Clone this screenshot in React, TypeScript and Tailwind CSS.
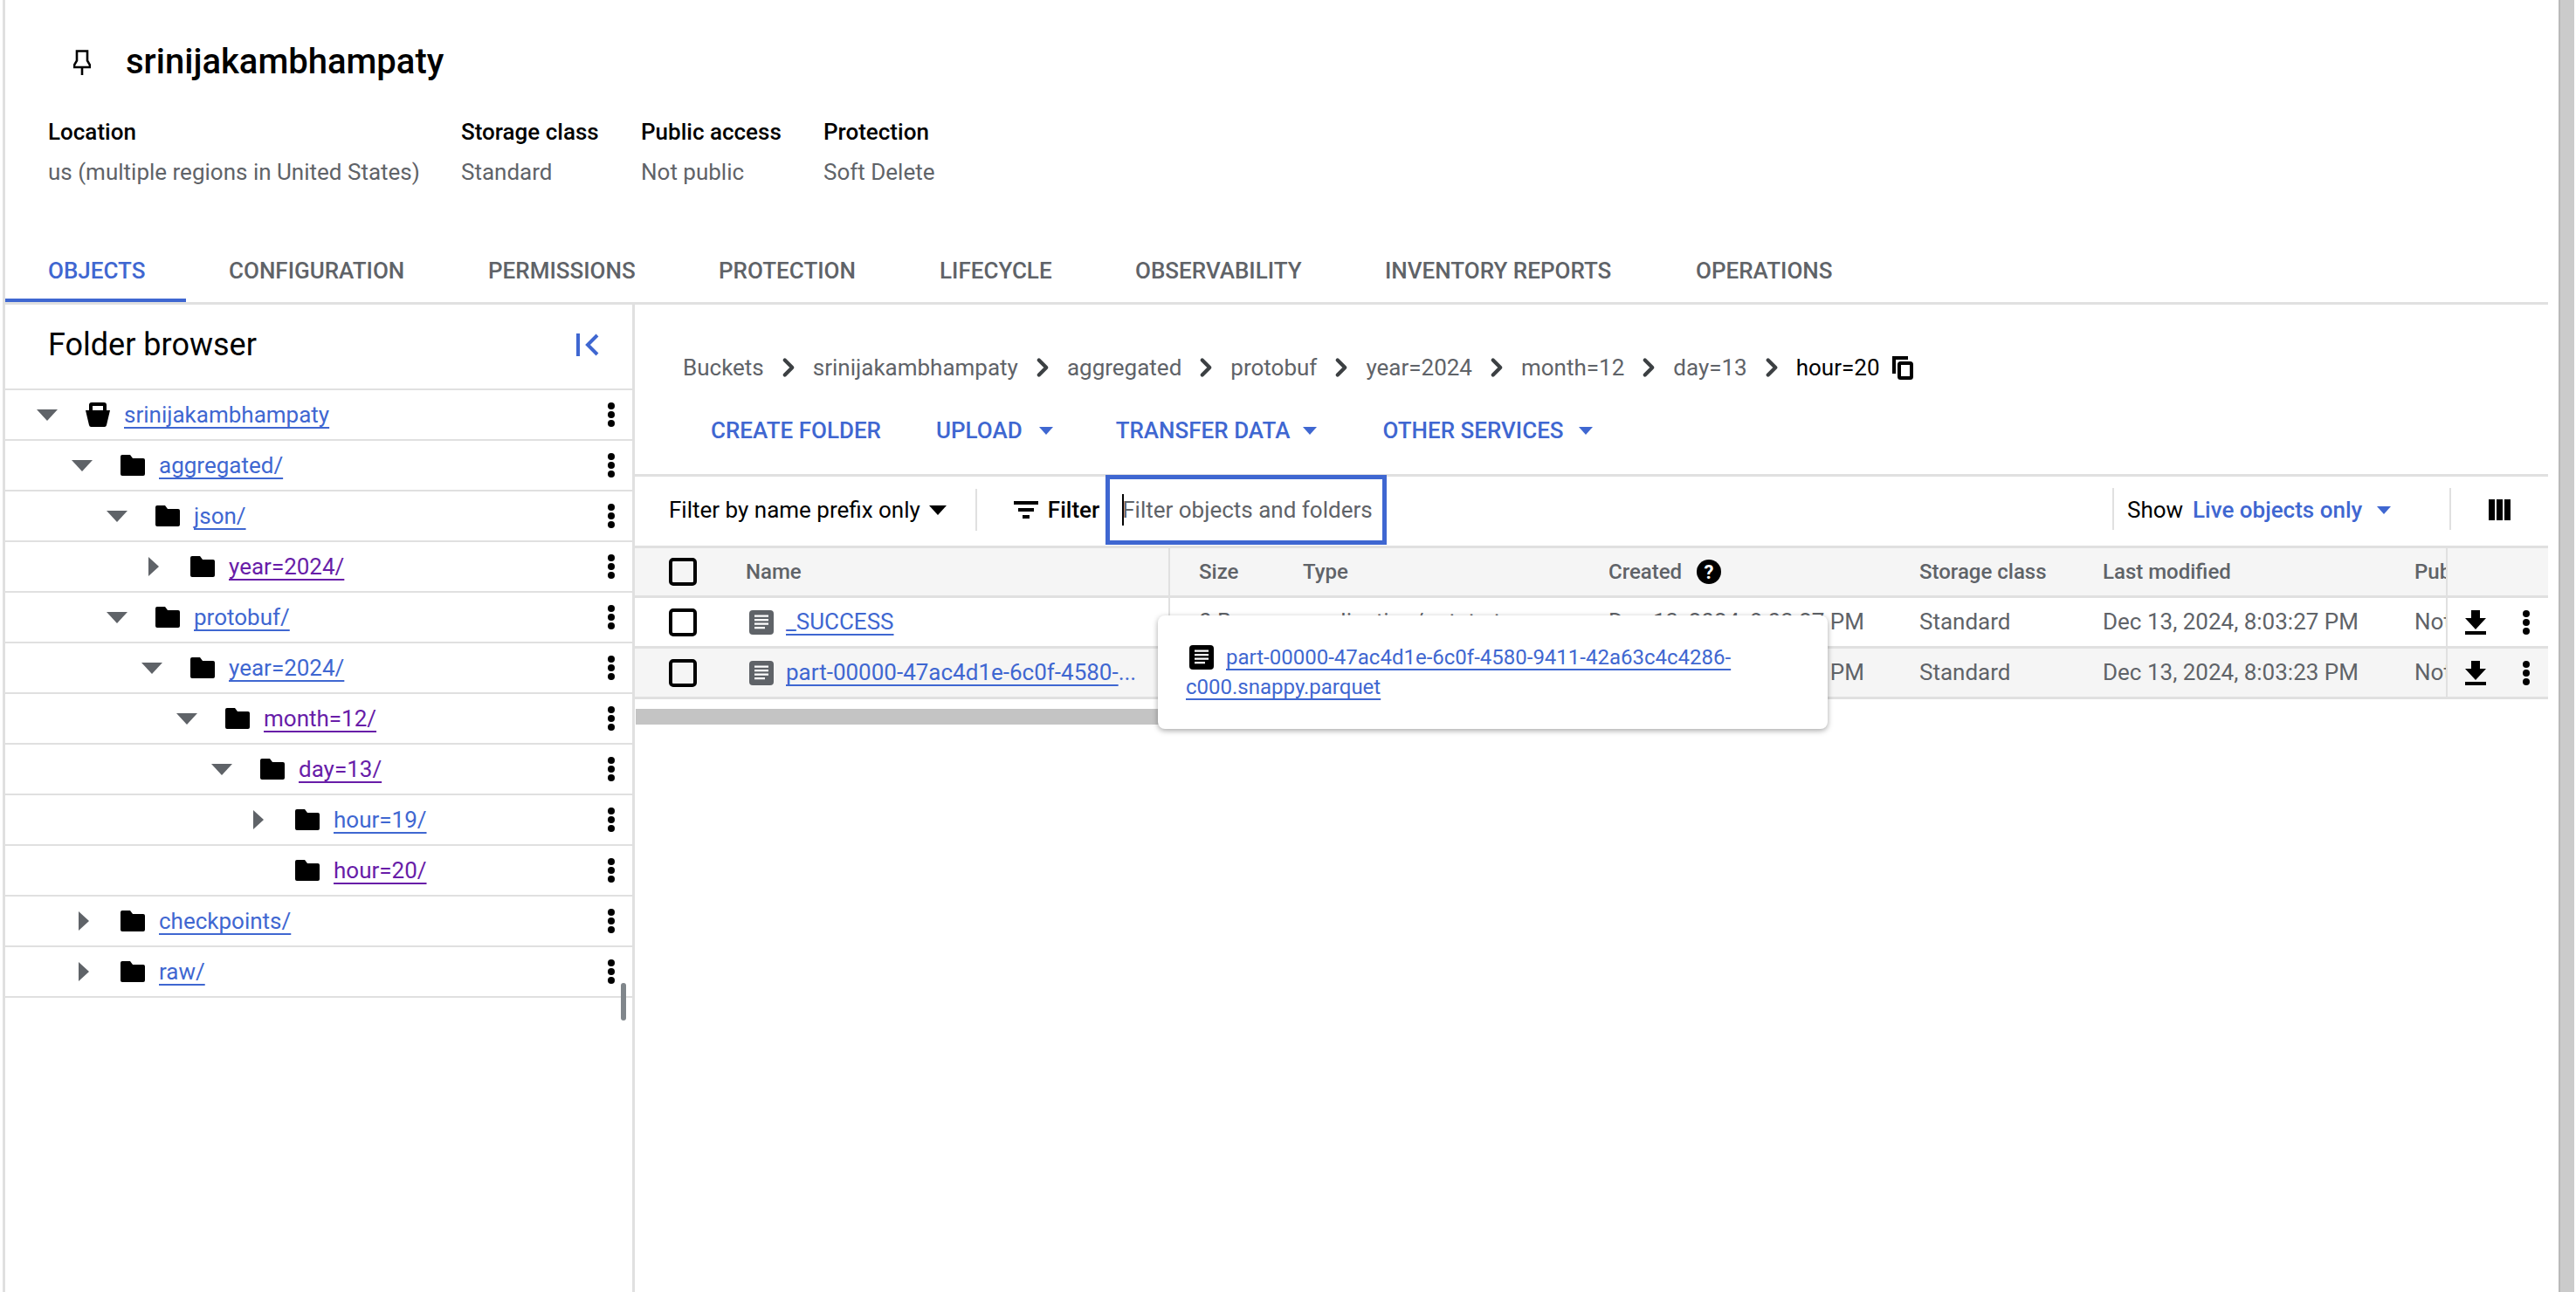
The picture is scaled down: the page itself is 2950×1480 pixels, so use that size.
import { ChevronRight } from "lucide-react";

const BLUE = "text-[#3f67d1]";
const LINK = "underline decoration-2 underline-offset-[5px] [text-decoration-skip-ink:none]";

const tabs = [
  { label: "OBJECTS", w: "w-[207px]" },
  { label: "CONFIGURATION", w: "w-[297px]" },
  { label: "PERMISSIONS", w: "w-[264px]" },
  { label: "PROTECTION", w: "w-[253px]" },
  { label: "LIFECYCLE", w: "w-[224px]" },
  { label: "OBSERVABILITY", w: "w-[286px]" },
  { label: "INVENTORY REPORTS", w: "w-[356px]" },
  { label: "OPERATIONS", w: "w-[260px]" },
];

const tree = [
  { name: "srinijakambhampaty", level: 0, arrow: "down", bucket: true },
  { name: "aggregated/", level: 1, arrow: "down" },
  { name: "json/", level: 2, arrow: "down" },
  { name: "year=2024/", level: 3, arrow: "right", visited: true },
  { name: "protobuf/", level: 2, arrow: "down" },
  { name: "year=2024/", level: 3, arrow: "down" },
  { name: "month=12/", level: 4, arrow: "down", visited: true },
  { name: "day=13/", level: 5, arrow: "down", visited: true },
  { name: "hour=19/", level: 6, arrow: "right" },
  { name: "hour=20/", level: 6, arrow: "none", visited: true },
  { name: "checkpoints/", level: 1, arrow: "right" },
  { name: "raw/", level: 1, arrow: "right" },
];

const crumbs = ["Buckets", "srinijakambhampaty", "aggregated", "protobuf", "year=2024", "month=12", "day=13"];

function Kebab({ className = "" }: { className?: string }) {
  return (
    <svg viewBox="0 0 10 30" className={`w-[10px] h-[30px] ${className}`} fill="currentColor">
      <circle cx="5" cy="5" r="4" />
      <circle cx="5" cy="15" r="4" />
      <circle cx="5" cy="25" r="4" />
    </svg>
  );
}

function Folder() {
  return (
    <svg viewBox="0 0 28 24" className="w-[28px] h-[24px] shrink-0" fill="#000">
      <path d="M2 0h9l3 4h12a2 2 0 0 1 2 2v16a2 2 0 0 1-2 2H2a2 2 0 0 1-2-2V2a2 2 0 0 1 2-2z" />
    </svg>
  );
}

function Bucket() {
  return (
    <svg viewBox="0 0 28 28" className="w-[28px] h-[28px] shrink-0" fill="#000">
      <path fillRule="evenodd" d="M7 0h14a3 3 0 0 1 3 3v6h4l-4 17a2.500 2.500 0 0 1-2.500 2h-15A2.500 2.500 0 0 1 4 26L0 9h4V3a3 3 0 0 1 3-3zm1 4v5h12V4H8z" />
    </svg>
  );
}

function FileIcon({ color }: { color: string }) {
  return (
    <svg viewBox="0 0 28 28" className="w-[28px] h-[28px] shrink-0">
      <rect width="28" height="28" rx="4" fill={color} />
      <path d="M6 5.500h16v2.200H6zM6 10h16v2.200H6zM6 14.500h16v2.200H6zM6 19h12v2.200H6z" fill="#fff" />
    </svg>
  );
}

function Caret({ className = "" }: { className?: string }) {
  return <span className={`inline-block w-0 h-0 border-x-[8px] border-x-transparent border-t-[9px] ${className}`} />;
}

function Checkbox() {
  return <span className="block w-[32px] h-[32px] border-[4px] border-black rounded-[5px] shrink-0" />;
}

function Download() {
  return (
    <svg viewBox="0 0 24 28" className="w-[24px] h-[28px]" fill="#000">
      <path d="M7 0h10v9h7L12 22 0 9h7zM0 24h24v4H0z" />
    </svg>
  );
}

function TreeRow({ row }: { row: (typeof tree)[number] }) {
  return (
    <div className="h-[58px] border-b-2 border-[#e0e0e0] flex items-center shrink-0">
      <div className="flex items-center" style={{ paddingLeft: 30 + row.level * 40 }}>
        <div className="w-[38px] flex items-center justify-center -ml-[1px]">
          {row.arrow === "down" && (
            <span className="w-0 h-0 border-x-[12px] border-x-transparent border-t-[13px] border-t-[#5f6368]" />
          )}
          {row.arrow === "right" && (
            <span className="ml-[4px] w-0 h-0 border-y-[11px] border-y-transparent border-l-[12px] border-l-[#5f6368]" />
          )}
        </div>
        <div className="w-[44px] pl-[25px] flex items-center overflow-visible">
          {row.bucket ? <Bucket /> : <Folder />}
        </div>
        <a className={`ml-[25px] text-[26px] leading-[34px] ${LINK} ${row.visited ? "text-[#681da8]" : BLUE}`}>
          {row.name}
        </a>
      </div>
      <Kebab className="ml-auto mr-[19px] shrink-0 text-black" />
    </div>
  );
}

function HeaderCell({ label, className = "" }: { label: string; className?: string }) {
  return <div className={`shrink-0 text-[24px] font-medium text-[#5f6368] ${className}`}>{label}</div>;
}

function ObjectRow({ name, time, shaded, partial }: { name: string; time: string; shaded?: boolean; partial?: string }) {
  return (
    <div className={`h-[58px] border-b-[3px] border-[#e0e0e0] flex items-center overflow-hidden ${shaded ? "bg-[#f5f5f5]" : "bg-white"}`}>
      <div className="w-[613px] shrink-0 flex items-center pl-[39px] border-r-2 border-[#e0e0e0] h-full">
        <Checkbox />
        <div className="ml-[60px] flex items-center">
          <FileIcon color="#5f6368" />
          <div className={`ml-[14px] text-[26px] ${BLUE} whitespace-nowrap`}>
            <span className={LINK}>{name}</span>
            {partial && <span>{partial}</span>}
          </div>
        </div>
      </div>
      <div className="w-[152px] shrink-0 pl-[33px] text-[26px] text-[#5f6368]">0 B</div>
      <div className="w-[350px] shrink-0 text-[26px] text-[#5f6368] whitespace-nowrap overflow-hidden">application/octet-stream</div>
      <div className="w-[356px] shrink-0 text-[26px] text-[#5f6368] whitespace-nowrap">{time}</div>
      <div className="w-[210px] shrink-0 text-[26px] text-[#5f6368]">Standard</div>
      <div className="w-[357px] shrink-0 text-[26px] text-[#5f6368] whitespace-nowrap">{time}</div>
      <div className="w-[36px] shrink-0 text-[26px] text-[#5f6368] overflow-hidden whitespace-nowrap">Not public</div>
      <div className="w-[116px] h-full shrink-0 flex items-center border-l-2 border-[#e0e0e0]">
        <div className="ml-[20px]"><Download /></div>
        <Kebab className="ml-[41px] text-black" />
      </div>
    </div>
  );
}

export default function App() {
  return (
    <div
      className="relative w-[2950px] h-[1480px] bg-white overflow-hidden flex"
      style={{ fontFamily: "Roboto, sans-serif" }}
    >
      <div className="flex-1 min-w-0 border-l-[3px] border-[#e0e0e0] ml-[3px] flex flex-col">
        <div className="w-[2912px] flex flex-col">
          {/* Header */}
          <div className="h-[113px] pl-[51px] flex items-end pb-[18px]">
            <div className="flex items-center">
              <svg viewBox="0 0 20 29" className="ml-[27px] w-[20px] h-[29px]" fill="none" stroke="#000" strokeWidth="2.600">
                <path d="M4 1.500h12v11l3 5v2.500H1v-2.500l3-5zM10 20v9" />
              </svg>
              <h1 className="ml-[40px] text-[40px] leading-[48px] font-medium text-black">srinijakambhampaty</h1>
            </div>
          </div>
          <div className="pl-[49px] flex pt-[20px] text-[26px]">
            <div className="w-[473px]">
              <div className="font-medium text-black leading-[36px]">Location</div>
              <div className="text-[#5f6368] mt-[10px] leading-[36px]">us (multiple regions in United States)</div>
            </div>
            <div className="w-[206px]">
              <div className="font-medium text-black leading-[36px]">Storage class</div>
              <div className="text-[#5f6368] mt-[10px] leading-[36px]">Standard</div>
            </div>
            <div className="w-[209px]">
              <div className="font-medium text-black leading-[36px]">Public access</div>
              <div className="text-[#5f6368] mt-[10px] leading-[36px]">Not public</div>
            </div>
            <div>
              <div className="font-medium text-black leading-[36px]">Protection</div>
              <div className="text-[#5f6368] mt-[10px] leading-[36px]">Soft Delete</div>
            </div>
          </div>

          {/* Tabs */}
          <div className="mt-[68px] h-[66px] border-b-[3px] border-[#e0e0e0] flex">
            {tabs.map((t, i) => (
              <div
                key={t.label}
                className={`${t.w} h-[63px] shrink-0 pl-[49px] pt-[9px] text-[26px] leading-[36px] font-medium border-b-[4px] ${
                  i === 0 ? `${BLUE} border-[#3f67d1]` : "text-[#5f6368] border-transparent"
                }`}
              >
                {t.label}
              </div>
            ))}
          </div>
        </div>

        <div className="flex flex-1 min-h-0">
          {/* Folder browser */}
          <aside className="relative w-[721px] shrink-0 border-r-[3px] border-[#e0e0e0]">
            <div className="h-[98px] border-b-2 border-[#e0e0e0] flex items-center pl-[49px] pr-[38px] pb-[5px]">
              <span className="text-[36px] text-black">Folder browser</span>
              <svg viewBox="0 0 26 26" className="ml-auto w-[26px] h-[26px]" fill="none" stroke="#3f67d1" strokeWidth="4">
                <path d="M2 0v26M24 2 13 13l11 11" />
              </svg>
            </div>
            {tree.map((row) => (
              <TreeRow key={row.name + row.level} row={row} />
            ))}
            <div className="absolute left-[705px] top-[777px] w-[6px] h-[43px] rounded-full bg-[#80868b]" />
          </aside>

          {/* Objects panel */}
          <main className="w-[2191px] shrink-0 min-w-0">
            <div className="h-[194px] flex flex-col">
              <div className="flex items-center pl-[55px] pt-[54px] text-[26px] leading-[36px] text-[#5f6368]">
                {crumbs.map((c) => (
                  <span key={c} className="flex items-center">
                    <span>{c}</span>
                    <ChevronRight size={34} strokeWidth={3} className="mx-[11px] text-[#3c4043]" />
                  </span>
                ))}
                <span className="text-black">hour=20</span>
                <svg viewBox="0 0 24 27" className="ml-[14px] w-[24px] h-[27px]" fill="none" stroke="#000" strokeWidth="4">
                  <path d="M18 2H2v18" />
                  <rect x="8" y="8" width="14" height="17" rx="1.500" />
                </svg>
              </div>
              <div className="flex items-center mt-[36px] text-[26px] leading-[36px] font-medium text-[#3f67d1]">
                <span className="ml-[87px]">CREATE FOLDER</span>
                <span className="ml-[63px]">UPLOAD</span>
                <Caret className="ml-[19px] border-t-[#3f67d1]" />
                <span className="ml-[72px]">TRANSFER DATA</span>
                <Caret className="ml-[15px] border-t-[#3f67d1]" />
                <span className="ml-[75px]">OTHER SERVICES</span>
                <Caret className="ml-[17px] border-t-[#3f67d1]" />
              </div>
            </div>

            {/* Filter bar */}
            <div className="relative h-[82px] border-t-[3px] border-[#e0e0e0] flex items-center text-[26px] pb-[3px]">
              <span className="ml-[39px] text-black">Filter by name prefix only</span>
              <Caret className="ml-[10px] border-x-[10px] border-t-[11px] border-t-black" />
              <span className="ml-[33px] w-[2px] h-[48px] bg-[#e0e0e0]" />
              <svg viewBox="0 0 28 20" className="ml-[42px] w-[28px] h-[20px]" fill="#000">
                <path d="M0 0h28v4H0zM5 8h18v4H5zM10 16h8v4h-8z" />
              </svg>
              <span className="ml-[11px] font-medium text-black">Filter</span>
              <div className="ml-[7px] w-[322px] h-[80px] border-[5px] border-[#3f67d1] flex items-center pl-[14px] self-start -mt-[2px]">
                <span className="w-[2px] h-[36px] bg-black -mr-[2px]" />
                <span className="text-[#5f6368]">Filter objects and folders</span>
              </div>
              <span className="absolute left-[1692px] top-[13px] w-[2px] h-[48px] bg-[#e0e0e0]" />
              <span className="absolute left-[1709px] text-black">Show</span>
              <span className="absolute left-[1784px] font-medium text-[#3f67d1]">Live objects only</span>
              <Caret className="absolute left-[1995px] border-t-[#3f67d1]" />
              <span className="absolute left-[2078px] top-[13px] w-[2px] h-[48px] bg-[#e0e0e0]" />
              <svg viewBox="0 0 25 24" className="absolute left-[2123px] w-[25px] h-[24px]" fill="#000">
                <path d="M0 0h7v24H0zM9 0h7v24H9zM18 0h7v24h-7z" />
              </svg>
            </div>

            {/* Table */}
            <div className="relative">
              <div className="h-[60px] bg-[#f5f5f5] border-y-[3px] border-[#e0e0e0] flex items-center overflow-hidden">
                <div className="w-[613px] shrink-0 flex items-center pl-[39px] border-r-2 border-[#e0e0e0] h-full">
                  <Checkbox />
                  <HeaderCell label="Name" className="ml-[56px]" />
                </div>
                <HeaderCell label="Size" className="w-[152px] pl-[33px]" />
                <HeaderCell label="Type" className="w-[350px]" />
                <div className="w-[356px] shrink-0 flex items-center">
                  <HeaderCell label="Created" />
                  <span className="ml-[17px] w-[28px] h-[28px] rounded-full bg-black text-white text-[22px] font-bold flex items-center justify-center">?</span>
                </div>
                <HeaderCell label="Storage class" className="w-[210px]" />
                <HeaderCell label="Last modified" className="w-[357px]" />
                <HeaderCell label="Public access" className="w-[36px] overflow-hidden whitespace-nowrap" />
                <div className="w-[116px] h-full shrink-0 border-l-2 border-[#e0e0e0]" />
              </div>
              <ObjectRow name="_SUCCESS" time="Dec 13, 2024, 8:03:27 PM" />
              <ObjectRow name="part-00000-47ac4d1e-6c0f-4580-" partial="..." time="Dec 13, 2024, 8:03:23 PM" shaded />
              <div className="mt-[11px] ml-[1px] w-[650px] h-[18px] bg-[#c4c4c4]" />

              {/* Hover card */}
              <div className="absolute left-[599px] top-[80px] w-[767px] h-[130px] bg-white rounded-[8px] shadow-[0_2px_6px_rgba(0,0,0,0.35)] pl-[32px] pt-[31px] text-[24px] leading-[34px] text-[#3f67d1]">
                <div className="flex items-center">
                  <span className="ml-[4px]"><FileIcon color="#000" /></span>
                  <a className={`ml-[14px] ${LINK}`}>part-00000-47ac4d1e-6c0f-4580-9411-42a63c4c4286-</a>
                </div>
                <a className={LINK}>c000.snappy.parquet</a>
              </div>
            </div>
          </main>
        </div>
      </div>

      {/* Page scrollbar */}
      <div className="w-[18px] mr-[2px] shrink-0 bg-[#cbcbcb] border-l-2 border-[#b9b9b9]" />
    </div>
  );
}
